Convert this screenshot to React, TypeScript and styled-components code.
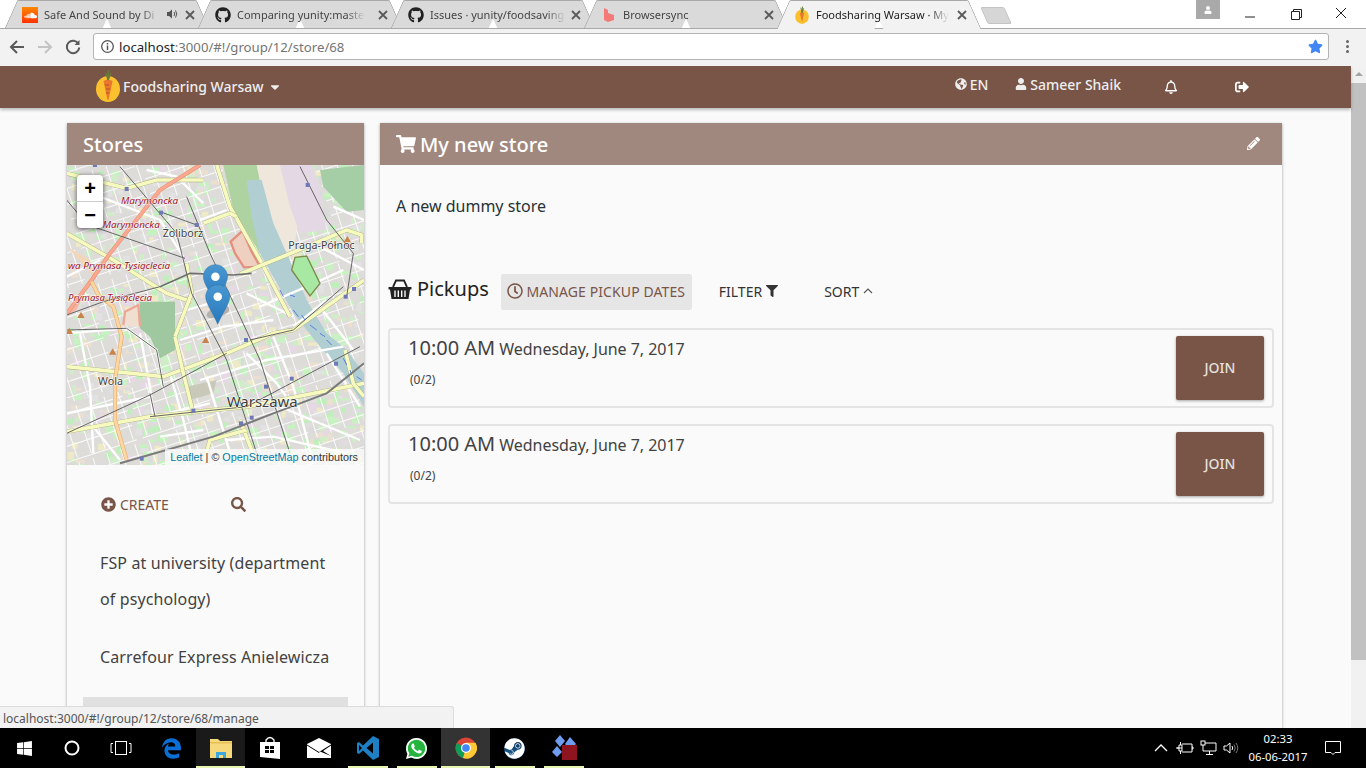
import React from 'react';
import styled, { createGlobalStyle } from 'styled-components';
import { FaGithub, FaSoundcloud, FaGlobeAmericas, FaUser, FaRegBell, FaSignOutAlt, FaShoppingCart, FaPencilAlt, FaPlusCircle, FaSearch, FaRegClock, FaFilter, FaWindows, FaSteam, FaWhatsapp, FaStar, FaCaretDown } from 'react-icons/fa';
import { FaEdgeLegacy } from 'react-icons/fa6';

const Global = createGlobalStyle`
  html, body { margin: 0; padding: 0; height: 100%; overflow: hidden; background: #fafafa; }
  * { box-sizing: border-box; }
  body { font-family: "Noto Sans", "Liberation Sans", sans-serif; }
`;

const Screen = styled.div`
  width: 1366px; height: 768px; display: flex; flex-direction: column; overflow: hidden; position: relative;
`;

/* ---------- browser chrome ---------- */
const TabStrip = styled.div`
  height: 28px; background: #fff; display: flex; align-items: flex-start; padding: 0 0 0 5px; position: relative; z-index: 3;
`;
const Tab = styled.div<{ $active?: boolean }>`
  position: relative; width: 204px; margin-right: -11px; height: ${p => (p.$active ? 29 : 28)}px;
  display: flex; align-items: center; padding: 0 0 ${p => (p.$active ? 1 : 0)}px 17px; z-index: ${p => (p.$active ? 3 : 1)};
  &::before, &::after {
    content: ""; position: absolute; top: 0; bottom: 0; width: 97px;
    background: ${p => (p.$active ? '#f2f2f2' : '#dadada')};
    border-top: 1px solid #a8a8a8;
    z-index: -1;
  }
  &::before { left: 6px; transform: skewX(-24deg); border-left: 1px solid #a8a8a8; border-top-left-radius: 2px; }
  &::after { right: 6px; transform: skewX(24deg); border-right: 1px solid #a8a8a8; border-top-right-radius: 2px; }
`;
const TabFav = styled.span`
  width: 16px; height: 16px; flex: none; display: flex; align-items: center; justify-content: center; font-size: 16px; color: #222; margin-top: 2px;
`;
const TabTitle = styled.span<{ $w: number; $dark?: boolean }>`
  margin-left: 6px; width: ${p => p.$w}px; font-size: 11px; white-space: nowrap; color: ${p => (p.$dark ? '#222' : '#444')};
  -webkit-mask-image: linear-gradient(to right, #000 85%, transparent 100%);
  mask-image: linear-gradient(to right, #000 85%, transparent 100%);
`;
const SoundIcon = styled.svg`
  width: 12px; height: 12px; flex: none; margin-left: 7px;
`;
const TabClose = styled.svg`
  width: 10px; height: 10px; position: absolute; right: 14px; top: 10px; stroke: #5a5a5a; stroke-width: 1.8; fill: none;
`;
const NewTab = styled.div`
  width: 24px; height: 17px; margin: 7px 0 0 14px; background: #d6d6d6; border: 1px solid #c4c4c4; border-radius: 2px; transform: skewX(24deg); flex: none;
`;
const WinControls = styled.div`
  margin-left: auto; display: flex; align-items: flex-start; padding-right: 3px;
`;
const Profile = styled.div`
  width: 24px; height: 19px; background: #a9a9a9; display: flex; align-items: center; justify-content: center; color: #fff; font-size: 8px; margin-right: 8px;
`;
const WinButton = styled.svg`
  width: 45px; height: 27px; stroke: #222; fill: none; stroke-width: 1;
`;

const Toolbar = styled.div`
  height: 38px; background: #f2f2f2; border-top: 1px solid #a9a9a9; display: flex; align-items: center; position: relative; z-index: 2; padding-bottom: 2px;
`;
const NavIcon = styled.svg<{ $off?: boolean }>`
  width: 16px; height: 16px; flex: none; margin-left: 12px; stroke: ${p => (p.$off ? '#c4c4c4' : '#5a5a5a')}; fill: none; stroke-width: 2;
  &:first-child { margin-left: 9px; }
`;
const Omnibox = styled.div`
  width: 1236px; height: 27px; margin-left: 12px; background: #fff; border: 1px solid #b4b4b4; border-radius: 3px; display: flex; align-items: center; padding: 0 5px 0 7px;
`;
const InfoIcon = styled.svg`
  width: 13px; height: 13px; flex: none; stroke: #555; fill: none; stroke-width: 1.3;
`;
const Url = styled.div`
  margin-left: 5px; font-size: 13.2px; color: #757575; white-space: nowrap;
  b { font-weight: 400; color: #222; }
`;
const Star = styled(FaStar)`
  margin-left: auto; color: #4285f4; font-size: 15px;
`;
const Dots = styled.div`
  margin-left: 17px; width: 3px; display: flex; flex-direction: column; gap: 2px;
  i { display: block; width: 3px; height: 3px; background: #666; border-radius: 50%; }
`;

/* ---------- page ---------- */
const Viewport = styled.div`
  flex: 1; min-height: 0; display: flex;
`;
const Page = styled.div`
  flex: 1; min-width: 0; display: flex; flex-direction: column; background: #fafafa;
`;
const Navbar = styled.div`
  height: 42px; flex: none; background: #795548; color: #eee; display: flex; align-items: center; padding: 0 102px 0 96px; box-shadow: 0 2px 3px rgba(0,0,0,.25); position: relative; z-index: 1; font-size: 14px; font-weight: 500;
`;
const Logo = styled.svg`
  width: 24px; height: 32px; flex: none; margin-top: -2px;
`;
const Brand = styled.span`
  margin: -2px 0 0 3px; white-space: nowrap;
`;
const BrandCaret = styled(FaCaretDown)`
  margin-left: 4px; font-size: 14px;
`;
const NavRight = styled.div`
  margin-left: auto; display: flex; align-items: center; margin-top: -6px;
`;
const NavItem = styled.span<{ $gap: number }>`
  display: inline-flex; align-items: center; gap: 3px; margin-left: ${p => p.$gap}px; white-space: nowrap; svg { font-size: 12px; }
`;
const NavGlyph = styled.span<{ $gap: number }>`
  display: inline-flex; margin-left: ${p => p.$gap}px; margin-top: 5px; font-size: 14px; color: #fff;
`;

const Content = styled.div`
  flex: 1; min-height: 0; overflow: hidden; display: flex; gap: 16px; padding: 15px 0 0 67px;
`;
const Card = styled.div<{ $w: number }>`
  width: ${p => p.$w}px; flex: none; background: #fafafa; box-shadow: 0 1px 3px rgba(0,0,0,.35); display: flex; flex-direction: column;
`;
const CardHeader = styled.div`
  height: 42px; flex: none; background: #a1887f; color: #fff; display: flex; align-items: center; padding: 0 16px; font-size: 20px; font-weight: 500; gap: 4px;
`;
const EditIcon = styled(FaPencilAlt)`
  margin-left: auto; margin-right: 6px; font-size: 13px; margin-top: -2px;
`;

const MapBox = styled.div`
  position: relative; height: 300px; overflow: hidden; flex: none;
  > svg { display: block; }
`;
const ZoomCtl = styled.div`
  position: absolute; left: 10px; top: 10px; width: 26px; background: #fff; border-radius: 4px; box-shadow: 0 1px 5px rgba(0,0,0,.65); font-family: "Liberation Sans", sans-serif;
`;
const ZoomBtn = styled.div<{ $first?: boolean }>`
  height: 26px; display: flex; align-items: center; justify-content: center; font-size: 20px; font-weight: 700; color: #000; line-height: 1; ${p => (p.$first ? 'border-bottom: 1px solid #ccc; height: 27px;' : '')}
`;
const Attribution = styled.div`
  position: absolute; right: 0; bottom: 0; height: 16px; padding: 0 6px 0 5px; background: rgba(255,255,255,.72); font: 10.8px/16px "Liberation Sans", sans-serif; color: #333; white-space: nowrap;
  a { color: #0078a8; text-decoration: none; }
`;

const StoreActions = styled.div`
  display: flex; align-items: center; padding: 30px 0 0 34px; height: 62px; color: #795548;
`;
const CreateAction = styled.span`
  display: inline-flex; align-items: center; gap: 4px; font-size: 14px; width: 130px; svg { font-size: 15px; }
`;
const SearchGlyph = styled(FaSearch)`
  font-size: 15px;
`;
const StoreList = styled.div`
  display: flex; flex-direction: column; padding: 0 16px; margin-top: 31px;
`;
const StoreItem = styled.div<{ $active?: boolean }>`
  padding: 0 10px 22px 17px; font-size: 16px; line-height: 36px; color: #424242; letter-spacing: .12px; ${p => (p.$active ? 'background: #e0e0e0; height: 48px;' : '')}
`;

const Description = styled.div`
  padding: 28px 16px 0; font-size: 16px; line-height: 26px; color: #263238;
`;
const PickupBar = styled.div`
  display: flex; align-items: center; margin-top: 55px; padding-left: 8px; height: 36px;
`;
const PickupTitle = styled.div`
  display: flex; align-items: center; gap: 5px; font-size: 20px; color: #222; margin-top: -8px;
`;
const Basket = styled.svg`
  width: 24px; height: 24px; flex: none; margin-top: 2px;
`;
const ManageBtn = styled.div`
  margin-left: 12px; height: 36px; width: 191px; background: #e6e6e6; border-radius: 2px; display: flex; align-items: center; justify-content: center; gap: 3px; color: #795548; font-size: 14px; white-space: nowrap; letter-spacing: .1px; padding-bottom: 2px; svg { font-size: 16px; }
`;
const PlainBtn = styled.div<{ $ml: number }>`
  margin-left: ${p => p.$ml}px; display: inline-flex; align-items: center; gap: 4px; font-size: 14px; color: #333; white-space: nowrap; padding-bottom: 2px; svg { font-size: 12px; }
`;
const Chevron = styled.svg`
  width: 10px; height: 6px; stroke: #555; fill: none; stroke-width: 1.1;
`;
const PickupList = styled.div`
  display: flex; flex-direction: column; gap: 16px; padding: 18px 8px 0;
`;
const PickupRow = styled.div`
  height: 80px; border: 2px solid #e4e4e4; border-radius: 4px; display: flex; align-items: flex-start; justify-content: space-between; padding: 6px 8px 0 18px;
`;
const PickupInfo = styled.div`
  display: flex; flex-direction: column; color: #424242;
`;
const PickupTime = styled.div`
  font-size: 20px; line-height: 26px; white-space: nowrap; margin-top: -1px; display: flex; align-items: baseline; gap: 4px;
  small { font-size: 16px; letter-spacing: -.04px; }
`;
const Slots = styled.div`
  font-size: 12px; margin-top: 10px; margin-left: 2px; line-height: 16px;
`;
const JoinBtn = styled.div`
  width: 88px; height: 64px; background: #795548; border-radius: 2px; color: #e8e0dc; font-size: 14px; font-weight: 500; display: flex; align-items: center; justify-content: center; padding-bottom: 2px; box-shadow: 0 1px 3px rgba(0,0,0,.35);
`;

const Scrollbar = styled.div`
  width: 15px; flex: none; background: #f1f1f1; display: flex; flex-direction: column; align-items: center; padding-top: 6px;
`;
const ScrollUp = styled.div`
  width: 0; height: 0; border-left: 4px solid transparent; border-right: 4px solid transparent; border-bottom: 4px solid #a3a3a3;
`;
const ScrollThumb = styled.div`
  width: 15px; height: 577px; background: #c1c1c1; margin-top: 7px;
`;

const StatusBubble = styled.div`
  position: absolute; left: 0; bottom: 40px; width: 454px; height: 22px; background: #f2f2f2; border: 1px solid #dcdcdc; border-left: 0; border-bottom: 0; border-top-right-radius: 3px; padding-left: 3px; font-size: 12px; line-height: 23px; color: #555; z-index: 5; white-space: nowrap;
`;

/* ---------- taskbar ---------- */
const Taskbar = styled.div`
  height: 40px; flex: none; background: #000; display: flex; align-items: stretch; color: #fff; position: relative; z-index: 6;
`;
const TaskSlot = styled.div<{ $active?: boolean; $dim?: boolean; $running?: boolean }>`
  width: 49px; flex: none; display: flex; align-items: center; justify-content: center; position: relative;
  background: ${p => (p.$active ? '#333' : p.$dim ? '#1a1a1a' : 'transparent')};
  ${p => (p.$running ? `&::after { content: ""; position: absolute; left: ${p.$active || p.$dim ? 0 : 5}px; right: ${p.$active || p.$dim ? 0 : 4}px; bottom: 0; height: 2px; background: #e6f5b0; }` : '')}
`;
const ShiftedGlyph = styled.svg`
  margin-right: 4px;
`;
const RoundGlyph = styled.span`
  width: 21px; height: 21px; border-radius: 50%; background: #25b53f; display: flex; align-items: center; justify-content: center; color: #fff; font-size: 25px;
`;
const SteamDisc = styled.span`
  width: 21px; height: 21px; border-radius: 50%; background: linear-gradient(#14254a, #1a6ea8); display: flex; align-items: center; justify-content: center; color: #fff; font-size: 21px;
`;
const Tray = styled.div`
  margin-left: auto; display: flex; align-items: center;
`;
const TrayIcon = styled.svg<{ $mr: number }>`
  width: 18px; height: 16px; stroke: #fff; fill: none; stroke-width: 1; margin-right: ${p => p.$mr}px;
`;
const Clock = styled.div`
  width: 68px; text-align: center; font-size: 11.3px; line-height: 18px; color: #fff; margin-right: 12px; margin-left: 3px; white-space: nowrap;
`;
const NotifyIcon = styled.svg`
  width: 18px; height: 18px; stroke: #fff; fill: none; stroke-width: 1; margin-right: 24px;
`;

/* ---------- map drawing ---------- */
const rnd = (() => { let s = 7; return () => { s = (s * 16807) % 2147483647; return s / 2147483647; }; })();
const tones = ['#dcdcdc', '#dfddda', '#c6f1c0', '#eee9c6', '#e6d8e4', '#dadada', '#e2e2e2', '#cfeec8', '#dedede', '#ecdfcf', '#c9f2c2', '#bff0bb'];
const blocks = Array.from({ length: 1500 }, () => ({
  x: 21 + rnd() * 891, y: 135 + rnd() * 900, w: 10 + rnd() * 20, h: 8 + rnd() * 16, f: tones[Math.floor(rnd() * tones.length)],
}));
const gridA = Array.from({ length: 34 }, (_, i) => -100 + i * 44);
const gridB = Array.from({ length: 32 }, (_, i) => 0 + i * 46);
const streets = [
  'M20 640 L200 625 L290 690 L310 800', 'M60 640 L90 800 L100 1000', 'M240 640 L270 800 L280 890', 'M360 660 L490 620 L640 600',
  'M330 760 L370 900 L400 1030', 'M440 770 L520 1030', 'M560 700 L650 790 L700 860', 'M640 650 L700 800 L760 1030', 'M20 880 L270 830', 'M280 890 L450 850', 'M420 780 L620 720 L850 680',
  'M600 560 L740 500 L850 450', 'M780 560 L880 690', 'M800 700 L900 860', 'M660 860 L900 960', 'M260 150 L350 170 L430 250', 'M120 230 L300 300 L370 410', 'M20 470 L120 420', 'M380 570 L520 530', 'M700 620 L800 540', 'M560 520 L700 590', 'M100 920 L180 1020', 'M500 960 L640 950 L860 1000', 'M300 950 L430 930', 'M420 300 L500 270', 'M780 380 L912 450', 'M820 260 L912 300',
];
const yellow = [
  'M470 135 L510 260 L600 420 L690 590', 'M20 340 L160 420 L320 520 L395 545', 'M20 740 L310 770 L500 700 L640 640 L700 630 L912 480',
  'M20 935 L270 890 L560 860 L912 790', 'M540 462 L680 405 L860 330 L905 345 L905 370', 'M20 160 L200 205 L290 180 L430 180', 'M430 310 L510 280 L530 290',
  'M345 650 L370 760 L400 880', 'M380 430 L395 520 L345 650', 'M540 900 L590 1030', 'M855 690 L880 790 L912 830', 'M430 1030 L450 960 L560 930',
];
const dark = [
  'M180 140 L350 340 L395 520 L500 720 L590 1000', 'M380 230 L450 400 L540 590 L600 720 L690 1000', 'M20 240 L70 300 L100 320 L375 415', 'M300 275 L410 315',
  'M20 630 L200 625 L290 690 L310 800', 'M270 820 L285 890', 'M20 940 L270 825 L500 700', 'M20 585 L130 545 L300 500', 'M270 890 L560 860 L900 680', 'M720 140 L800 300 L880 400 L860 530',
  'M850 500 L700 630 L570 660',
];
const squares: [number, number][] = [[105, 135], [200, 207], [303, 278], [410, 315], [743, 195], [558, 660], [618, 800], [695, 776], [828, 731], [857, 530], [882, 507], [400, 872], [575, 893], [543, 910], [245, 1016]];
const triangles: [number, number][] = [[63, 585], [28, 633], [158, 695], [437, 660], [862, 358]];

const MapDrawing = () => (
  <svg width="297" height="300" viewBox="21 135 891 900" fontFamily="'Noto Sans', sans-serif">
    <defs>
      <linearGradient id="pin" x1="0" y1="0" x2="0" y2="1"><stop offset="0" stopColor="#4a97d0" /><stop offset="1" stopColor="#2678bd" /></linearGradient>
    </defs>
    <rect x="21" y="135" width="891" height="900" fill="#dedcd9" />
    {blocks.map((b, i) => <rect key={i} x={b.x} y={b.y} width={b.w} height={b.h} fill={b.f} />)}
    <g transform="rotate(-18 450 600)" stroke="#fff" strokeWidth="3" opacity=".85">
      {gridA.map(x => <line key={x} x1={x} y1="-100" x2={x} y2="1300" strokeDasharray="150 14" />)}
      {gridB.map(y => <line key={y} x1="-100" y1={y} x2="1200" y2={y} strokeDasharray="230 18" />)}
    </g>
    <polygon points="240,545 345,545 345,690 300,715 270,650 240,625" fill="#9fc7a0" />
    <polygon points="780,150 912,135 912,270 860,275 790,200" fill="#a5cda6" />
    <polygon points="490,135 590,135 640,300 650,390 600,400 520,270" fill="#aed3a0" />
    <polygon points="590,135 700,135 720,260 700,400 640,390" fill="#efe7dc" />
    <polygon points="660,135 760,135 780,220 800,330 720,340 690,260" fill="#e4d8e4" />
    <polygon points="560,180 605,180 640,310 680,400 740,540 800,640 860,690 912,760 912,860 850,760 780,680 700,580 640,470 600,400 575,290" fill="#b1cfd2" />
    <polygon points="380,800 470,780 460,820 390,840" fill="#c9c9b9" />
    {streets.map((d, i) => <path key={i} d={d} fill="none" stroke="#fff" strokeWidth="7" />)}
    <path d="M512 365 L548 332 L575 395 L600 440 L552 442 L525 400 Z" fill="#efcfc0" stroke="#e58f7f" strokeWidth="7" />
    <polygon points="705,412 740,408 780,490 750,528 695,450" fill="#a7e8a2" stroke="#7c8a4c" strokeWidth="4" />
    <path d="M190 615 L195 575 L235 555 L240 620" fill="#f0dfd0" stroke="#eda695" strokeWidth="7" />
    <path d="M21 590 L60 530 L70 525 L50 570 Z" fill="#f5b8a8" />
    <path d="M21 380 L90 420 L110 480" fill="#f3d6b8" stroke="none" />
    {yellow.map((d, i) => <g key={i}><path d={d} fill="none" stroke="#a3a378" strokeWidth="13" /><path d={d} fill="none" stroke="#f7fabf" strokeWidth="11" /></g>)}
    <path d="M420 135 L300 210 L150 400 L95 480 L21 580" fill="none" stroke="#e88a70" strokeWidth="12" />
    <path d="M420 135 L300 210 L150 400 L95 480 L21 580" fill="none" stroke="#f9a98f" strokeWidth="9" />
    <path d="M95 485 L115 525 L160 560 L185 650 L165 780 L165 900 L200 1020" fill="none" stroke="#e6a75c" strokeWidth="12" />
    <path d="M95 485 L115 525 L160 560 L185 650 L165 780 L165 900 L200 1020" fill="none" stroke="#fcd6a4" strokeWidth="9" />
    {dark.map((d, i) => <path key={i} d={d} fill="none" stroke="#666" strokeWidth="3" />)}
    <path d="M300 500 L390 460 L520 465 L575 460" fill="none" stroke="#6e6e6e" strokeWidth="5" />
    <path d="M180 1030 L460 950 L640 880 L800 820 L912 730" fill="none" stroke="#7a7a7a" strokeWidth="6" />
    <g stroke="#5a7de0" strokeWidth="3" fill="none">
      <path d="M660 510 L670 530 M690 525 L705 530 M700 570 L715 590 M750 615 L770 630 M780 640 L795 650 M800 660 L815 675 M850 715 L860 735 M870 750 L875 765 M890 770 L905 780 M725 585 L735 600" />
    </g>
    {squares.map(([x, y], i) => <rect key={i} x={x - 6} y={y - 6} width="12" height="12" fill="#6f78b8" />)}
    {triangles.map(([x, y], i) => <polygon key={i} points={`${x},${y - 10} ${x + 11},${y + 9} ${x - 11},${y + 9}`} fill="#c98349" />)}
    <g fontStyle="italic" fontSize="29.5" fill="#9a0f22" stroke="#fff" strokeWidth="2.5" paintOrder="stroke">
      <text x="183" y="253">Marymoncka</text>
      <text x="128" y="324">Marymoncka</text>
      <text x="24" y="447">wa Prymasa Tysiąclecia</text>
      <text x="24" y="543" fontSize="28.5">Prymasa Tysiąclecia</text>
    </g>
    <g fontSize="32" fill="#3c3c3c" stroke="#fff" strokeWidth="3" paintOrder="stroke">
      <text x="308" y="352">Żoliborz</text>
      <text x="685" y="388">Praga-Północ</text>
      <text x="114" y="796">Wola</text>
      <text x="500" y="862" fontSize="45">Warszawa</text>
    </g>
    <g transform="translate(462,555) skewX(-40) scale(1,.7)" opacity=".28"><ellipse cx="30" cy="30" rx="30" ry="28" fill="#444" /></g>
    <g transform="translate(430,434) scale(2.9)">
      <path d="M12.5 0C5.6 0 0 5.6 0 12.5C0 19 8 30 12.5 41C17 30 25 19 25 12.5C25 5.6 19.4 0 12.5 0Z" fill="url(#pin)" stroke="#2a6ea3" strokeWidth=".5" />
      <circle cx="12.5" cy="12.5" r="4.4" fill="#fff" />
    </g>
    <g transform="translate(437,494) scale(2.9)">
      <path d="M12.5 0C5.6 0 0 5.6 0 12.5C0 19 8 30 12.5 41C17 30 25 19 25 12.5C25 5.6 19.4 0 12.5 0Z" fill="url(#pin)" stroke="#2a6ea3" strokeWidth=".5" />
      <circle cx="12.5" cy="12.5" r="4.4" fill="#fff" />
    </g>
  </svg>
);

/* ---------- small drawings ---------- */
const CarrotLogo = () => (
  <svg viewBox="0 0 24 32" width="16" height="18">
    <ellipse cx="12" cy="19" rx="12" ry="13" fill="#fbc02d" />
    <path d="M8 12 L16 12 L12 29 Z" fill="#e8762c" />
    <path d="M12 12 L10 3 M12 12 L13 1 M12 12 L15 4" stroke="#5d7a3a" strokeWidth="1.6" fill="none" />
  </svg>
);
const BrowsersyncIcon = () => (
  <svg viewBox="0 0 16 16" width="16" height="16"><path d="M3 1 L7 3 L7 6 L13 8 L13 13 L7 15 L3 13 Z" fill="#f47a78" /></svg>
);
const CloseX = () => <TabClose viewBox="0 0 10 10"><path d="M1 1 L9 9 M9 1 L1 9" /></TabClose>;

const tabs = [
  { icon: <FaSoundcloud color="#fff" size={13} />, title: 'Safe And Sound by Di', w: 115, bg: 'linear-gradient(#ff8800,#ff3300)', sound: true },
  { icon: <FaGithub />, title: 'Comparing yunity:master', w: 128 },
  { icon: <FaGithub />, title: 'Issues · yunity/foodsaving', w: 136 },
  { icon: <BrowsersyncIcon />, title: 'Browsersync', w: 136 },
  { icon: <CarrotLogo />, title: 'Foodsharing Warsaw · My', w: 133, active: true },
];

const stores = ['FSP at university (department of psychology)', 'Carrefour Express Anielewicza'];
const pickups = [0, 1];

const App = () => (
  <Screen>
    <Global />
    <TabStrip>
      {tabs.map(t => (
        <Tab key={t.title} $active={t.active}>
          <TabFav style={t.bg ? { background: t.bg } : undefined}>{t.icon}</TabFav>
          <TabTitle $w={t.w} $dark={t.active}>{t.title}</TabTitle>
          {t.sound && (
            <SoundIcon viewBox="0 0 12 12"><path d="M1 4 H3 L6 1.5 V10.5 L3 8 H1 Z" fill="#555" /><path d="M8 4 Q9.5 6 8 8 M9.5 2.5 Q12 6 9.5 9.5" stroke="#555" fill="none" /></SoundIcon>
          )}
          <CloseX />
        </Tab>
      ))}
      <NewTab />
      <WinControls>
        <Profile><FaUser /></Profile>
        <WinButton viewBox="0 0 45 27"><path d="M17 17 H27" /></WinButton>
        <WinButton viewBox="0 0 45 27"><path d="M18.5 11.5 H26.5 V19.5 H18.5 Z M20.5 11.5 V9.5 H28.5 V17.5 H26.5" /></WinButton>
        <WinButton viewBox="0 0 45 27"><path d="M18 8 L28 18 M28 8 L18 18" /></WinButton>
      </WinControls>
    </TabStrip>
    <Toolbar>
      <NavIcon viewBox="0 0 16 16"><path d="M15 8 H2 M8 2 L2 8 L8 14" /></NavIcon>
      <NavIcon $off viewBox="0 0 16 16"><path d="M1 8 H14 M8 2 L14 8 L8 14" /></NavIcon>
      <NavIcon viewBox="0 0 16 16"><path d="M13.5 5 A6.2 6.2 0 1 0 14.2 8.5" /><path d="M14.5 1 V6 H9.5 Z" fill="#5a5a5a" stroke="none" /></NavIcon>
      <Omnibox>
        <InfoIcon viewBox="0 0 13 13"><circle cx="6.5" cy="6.5" r="5.8" /><path d="M6.5 5.5 V10 M6.5 3 V4.4" strokeWidth="1.5" /></InfoIcon>
        <Url><b>localhost</b>:3000/#!/group/12/store/68</Url>
        <Star />
      </Omnibox>
      <Dots><i /><i /><i /></Dots>
    </Toolbar>
    <Viewport>
      <Page>
        <Navbar>
          <Logo viewBox="0 0 24 32">
            <ellipse cx="12" cy="19" rx="12" ry="13" fill="#fbc02d" />
            <path d="M7.5 11 Q12 8 16.5 11 L12.5 30 L11.5 30 Z" fill="#e8762c" />
            <path d="M9 15 H13 M10 19 H14 M10 23 H13" stroke="#b5541c" strokeWidth="1" />
            <path d="M12 10 L10 3 M12 10 L12.5 0 M12 10 L15 3" stroke="#6b7a3a" strokeWidth="1.5" fill="none" />
          </Logo>
          <Brand>Foodsharing Warsaw</Brand>
          <BrandCaret />
          <NavRight>
            <NavItem $gap={0}><FaGlobeAmericas />EN</NavItem>
            <NavItem $gap={27}><FaUser />Sameer Shaik</NavItem>
            <NavGlyph $gap={43}><FaRegBell /></NavGlyph>
            <NavGlyph $gap={57}><FaSignOutAlt /></NavGlyph>
          </NavRight>
        </Navbar>
        <Content>
          <Card $w={297}>
            <CardHeader>Stores</CardHeader>
            <MapBox>
              <MapDrawing />
              <ZoomCtl>
                <ZoomBtn $first>+</ZoomBtn>
                <ZoomBtn>−</ZoomBtn>
              </ZoomCtl>
              <Attribution><a>Leaflet</a> | © <a>OpenStreetMap</a> contributors</Attribution>
            </MapBox>
            <StoreActions>
              <CreateAction><FaPlusCircle />CREATE</CreateAction>
              <SearchGlyph />
            </StoreActions>
            <StoreList>
              {stores.map(s => <StoreItem key={s}>{s}</StoreItem>)}
              <StoreItem $active />
            </StoreList>
          </Card>
          <Card $w={902}>
            <CardHeader>
              <FaShoppingCart />My new store
              <EditIcon />
            </CardHeader>
            <Description>A new dummy store</Description>
            <PickupBar>
              <PickupTitle>
                <Basket viewBox="0 0 24 24">
                  <path d="M5 10 L8 3.5 H16 L19 10" fill="none" stroke="#222" strokeWidth="1.8" />
                  <path d="M0.5 10 H23.5 V12.5 H22 L20.5 22 H3.5 L2 12.5 H0.5 Z" fill="#222" />
                  <path d="M7 13.5 V20 M10.3 13.5 V20 M13.7 13.5 V20 M17 13.5 V20" stroke="#fafafa" strokeWidth="1.4" />
                </Basket>
                Pickups
              </PickupTitle>
              <ManageBtn><FaRegClock />MANAGE PICKUP DATES</ManageBtn>
              <PlainBtn $ml={27}>FILTER<FaFilter /></PlainBtn>
              <PlainBtn $ml={46}>SORT<Chevron viewBox="0 0 10 6"><path d="M1 5 L5 1 L9 5" /></Chevron></PlainBtn>
            </PickupBar>
            <PickupList>
              {pickups.map(i => (
                <PickupRow key={i}>
                  <PickupInfo>
                    <PickupTime>10:00 AM <small>Wednesday, June 7, 2017</small></PickupTime>
                    <Slots>(0/2)</Slots>
                  </PickupInfo>
                  <JoinBtn>JOIN</JoinBtn>
                </PickupRow>
              ))}
            </PickupList>
          </Card>
        </Content>
      </Page>
      <Scrollbar><ScrollUp /><ScrollThumb /></Scrollbar>
    </Viewport>
    <StatusBubble>localhost:3000/#!/group/12/store/68/manage</StatusBubble>
    <Taskbar>
      <TaskSlot><FaWindows size={17} /></TaskSlot>
      <TaskSlot>
        <ShiftedGlyph width="16" height="16" viewBox="0 0 16 16"><circle cx="8" cy="8" r="6.5" fill="none" stroke="#fff" strokeWidth="2" /></ShiftedGlyph>
      </TaskSlot>
      <TaskSlot>
        <ShiftedGlyph width="22" height="16" viewBox="0 0 22 16" fill="none" stroke="#fff"><rect x="5.5" y="1.5" width="11" height="13" /><path d="M3 3.5 H1 V12.5 H3 M19 3.5 H21 V12.5 H19" /></ShiftedGlyph>
      </TaskSlot>
      <TaskSlot><FaEdgeLegacy size={21} color="#0a6fd6" /></TaskSlot>
      <TaskSlot $dim $running>
        <svg width="24" height="22" viewBox="0 0 24 22"><path d="M1 2 H9 L11 4 H23 V21 H1 Z" fill="#f6d97a" /><rect x="1" y="5" width="22" height="1.5" fill="#e8bf55" /><path d="M7 21 V15 H17 V21 H14 V18 H10 V21 Z" fill="#3aa7e0" /></svg>
      </TaskSlot>
      <TaskSlot>
        <svg width="22" height="24" viewBox="0 0 22 24"><path d="M1 6 H21 V23 L1 21 Z" fill="#fff" /><path d="M7 6 V4 Q11 -1 15 4 V6" fill="none" stroke="#fff" strokeWidth="1.3" /><path d="M6 10 H10 V13 H6 Z M11 10 H15 V13 H11 Z M6 14 H10 V17 H6 Z M11 14 H15 V17 H11 Z" fill="#000" /></svg>
      </TaskSlot>
      <TaskSlot>
        <svg width="24" height="20" viewBox="0 0 24 20"><path d="M12 0 L24 6 V20 H0 V6 Z" fill="#fff" /><path d="M0 6.5 L12 14 L24 6.5 L24 7.5 L16 13 L24 18 L13 13.5 L12 15 L0 7.5 Z" fill="#000" /></svg>
      </TaskSlot>
      <TaskSlot $running>
        <svg width="24" height="26" viewBox="0 0 24 26"><path d="M17 1 L23 4 V22 L17 25 L7 15.5 L3 19 L1 18 V8 L3 7 L7 10.5 Z" fill="#1f7fc4" /><path d="M17 7.5 L10.5 13 L17 18.5 Z M3 10 V16 L6 13 Z" fill="#000" /></svg>
      </TaskSlot>
      <TaskSlot $running><RoundGlyph><FaWhatsapp /></RoundGlyph></TaskSlot>
      <TaskSlot $active $running>
        <svg width="22" height="22" viewBox="0 0 22 22">
          <circle cx="11" cy="11" r="10.5" fill="#db4437" />
          <path d="M11 11 L1.8 6 A10.5 10.5 0 0 0 8 21 Z" fill="#0f9d58" />
          <path d="M11 5.8 H20.5 A10.5 10.5 0 0 1 8 21 L11 11 Z" fill="#fcc934" />
          <circle cx="11" cy="11" r="5" fill="#fff" />
          <circle cx="11" cy="11" r="3.8" fill="#4285f4" />
        </svg>
      </TaskSlot>
      <TaskSlot $running><SteamDisc><FaSteam /></SteamDisc></TaskSlot>
      <TaskSlot $running>
        <svg width="26" height="26" viewBox="0 0 26 26"><path d="M9 0 L14 6 L9 12 L4 6 Z M19 2 L25 9 L19 15 L14 9 Z M6 11 L11 17 L6 22 L1 17 Z" fill="#6f9df0" /><rect x="11" y="10" width="15" height="15" fill="#8e1420" /></svg>
      </TaskSlot>
      <Tray>
        <TrayIcon $mr={6} viewBox="0 0 18 16"><path d="M3 11 L9 5 L15 11" strokeWidth="1.3" /></TrayIcon>
        <TrayIcon $mr={6} viewBox="0 0 18 16"><path d="M1 8 H3 M3 5 H6 V11 H3 Z M6 8 H0 M4.5 2 V5 M4.5 11 V14 M6 4 H16 V12 H6 M16 7 H17 V9 H16" /></TrayIcon>
        <TrayIcon $mr={4} viewBox="0 0 18 16"><path d="M3 3 H16 V11 H3 Z M9.5 11 V14 M6 14.5 H13" /><rect x="1" y="1" width="4" height="4" fill="#000" /></TrayIcon>
        <TrayIcon $mr={1} viewBox="0 0 18 16"><path d="M2 6 H4.5 L8 3 V13 L4.5 10 H2 Z M10 6 Q11.5 8 10 10" /><path d="M12 4.5 Q14.5 8 12 11.5 M14 3 Q17.5 8 14 13" stroke="#777" /></TrayIcon>
        <Clock>02:33<br />06-06-2017</Clock>
        <NotifyIcon viewBox="0 0 18 18"><path d="M1.5 2.5 H16.5 V13.5 H11 L9 15.5 L7 13.5 H1.5 Z" /></NotifyIcon>
      </Tray>
    </Taskbar>
  </Screen>
);

export default App;
